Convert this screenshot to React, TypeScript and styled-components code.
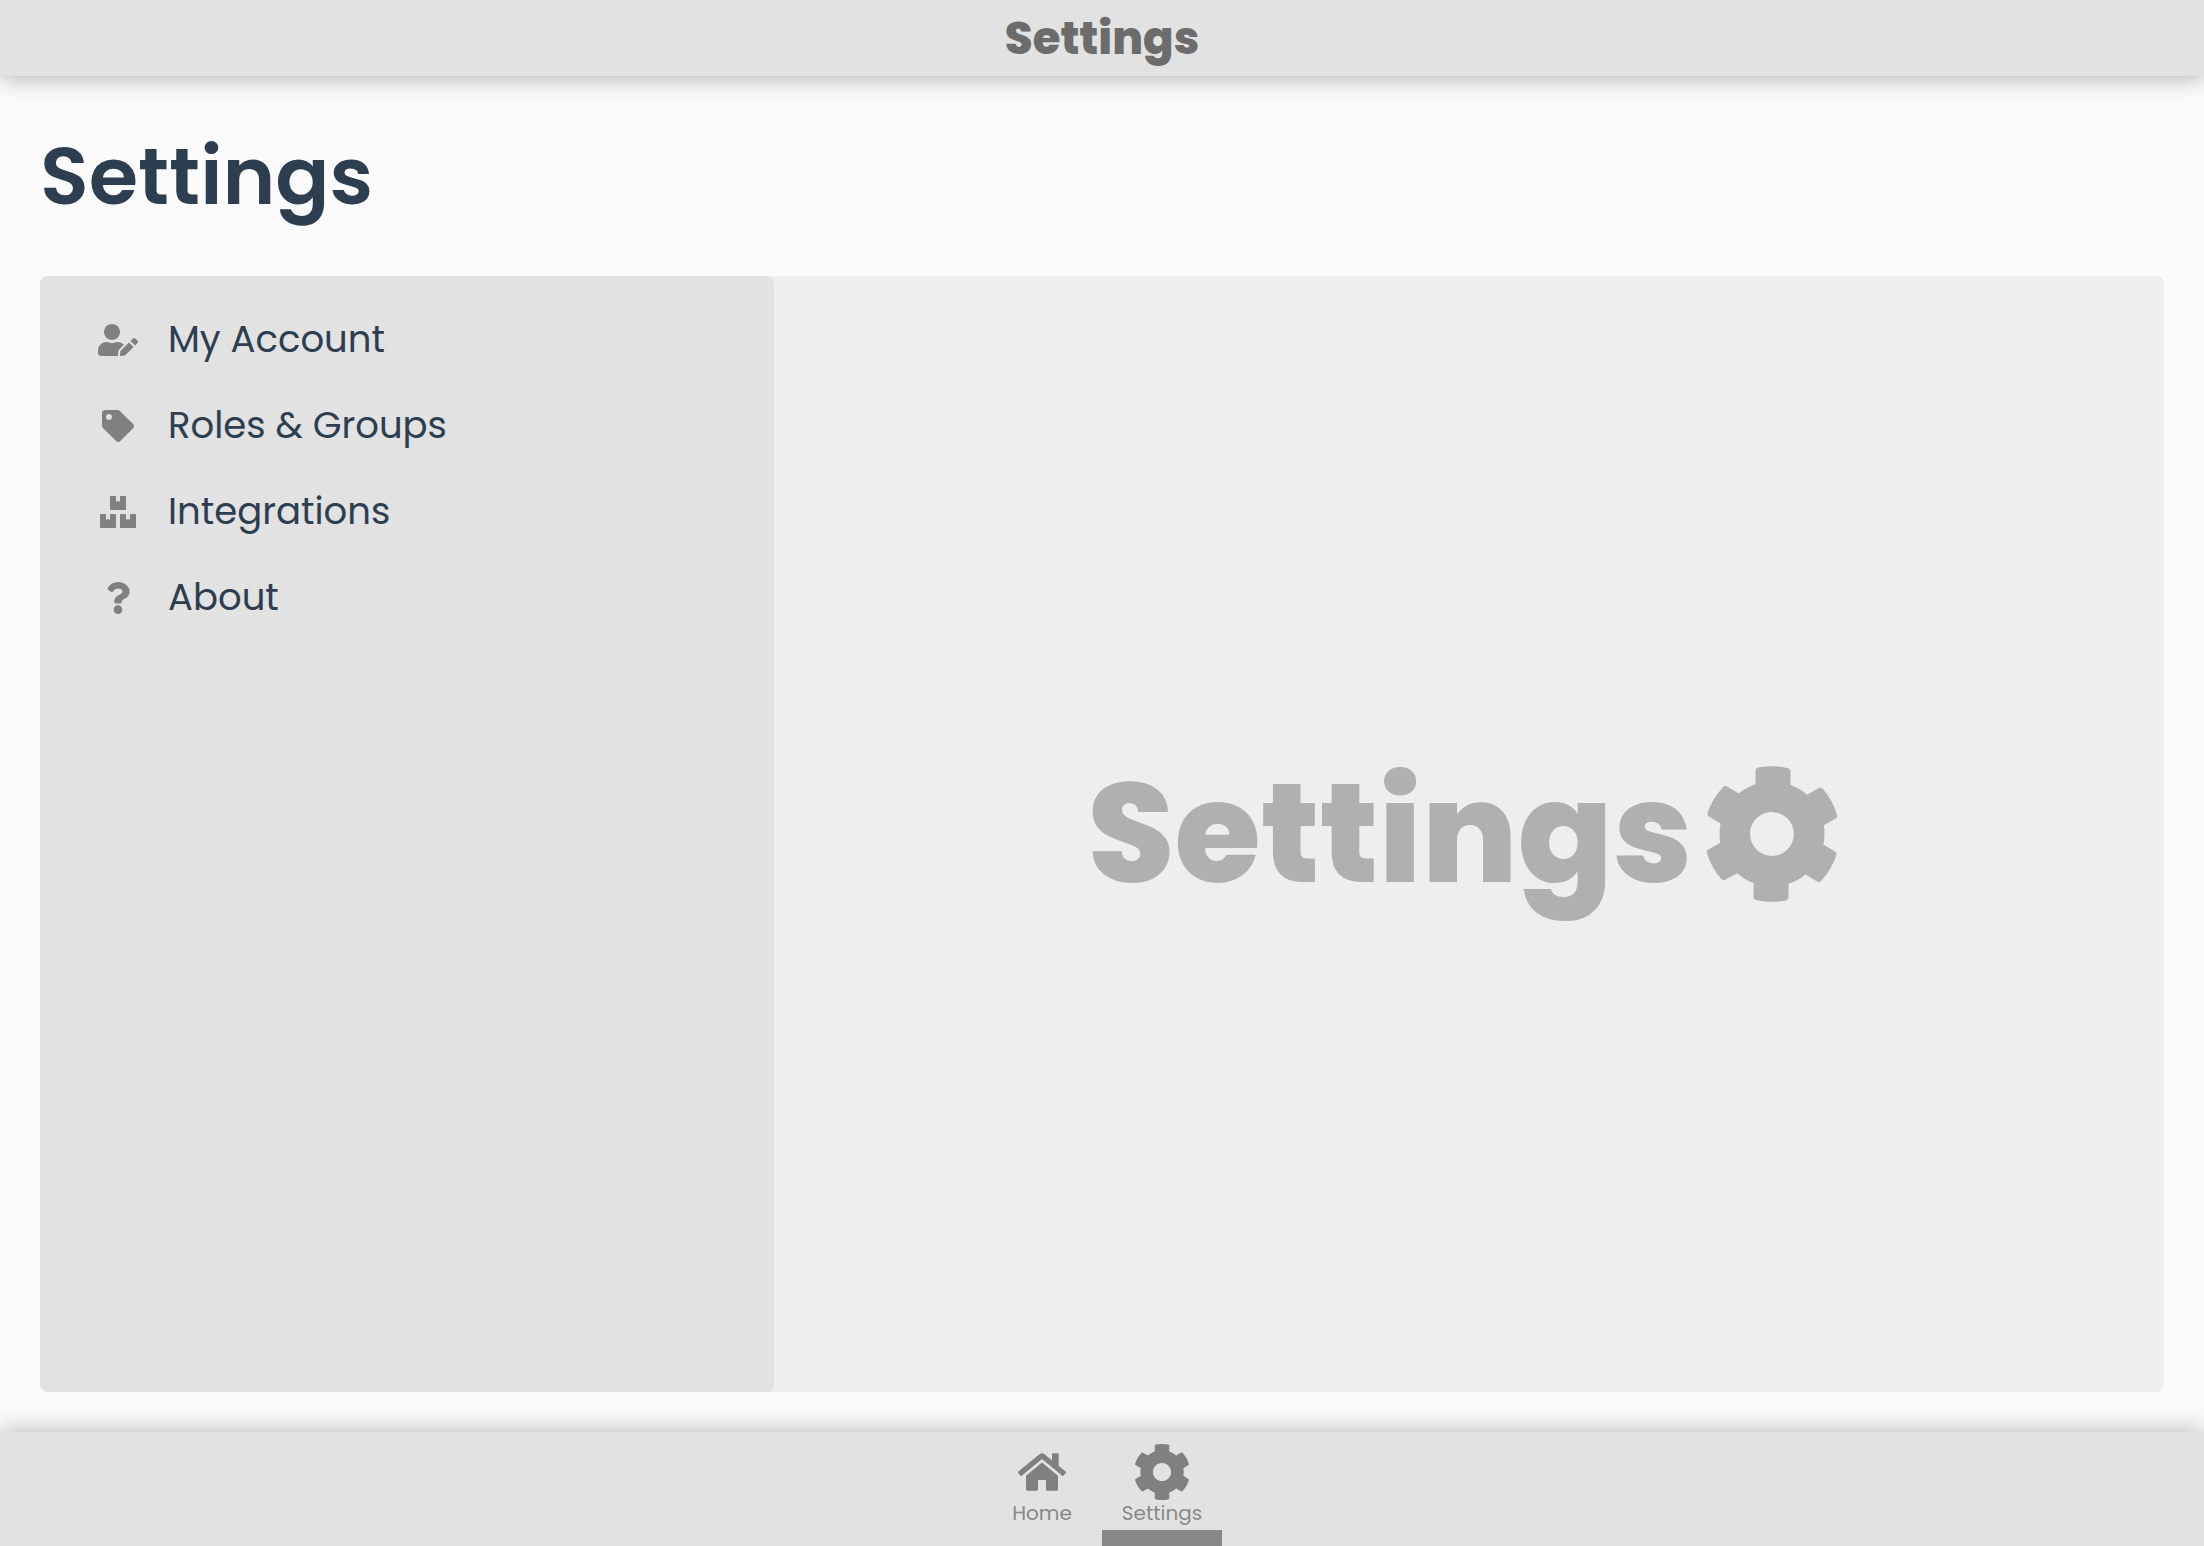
import React from "react";
import styled, { createGlobalStyle } from "styled-components";
import { FaBoxes, FaCog, FaHome, FaQuestion, FaTag, FaUserEdit } from "react-icons/fa";

const GlobalStyle = createGlobalStyle`
  *, *::before, *::after { box-sizing: border-box; }
  body {
    margin: 0;
    background: #fbfbfb;
    color: #2c3e50;
    font-family: Poppins, Inter, "Open Sans", sans-serif;
  }
`;

const Page = styled.div`
  display: flex;
  flex-direction: column;
  min-height: 100vh;
`;

const TopBar = styled.header`
  display: flex;
  align-items: center;
  justify-content: center;
  height: 76px;
  padding-top: 2px;
  background: #e2e2e2;
  box-shadow: 0 0 24px rgba(0, 0, 0, 0.35);
  color: #6c6c6c;
  font-size: 45px;
  font-weight: 800;
`;

const Main = styled.main`
  display: flex;
  flex: 1;
  flex-direction: column;
  padding: 0 40px 40px;
`;

const Title = styled.h1`
  margin: 0;
  font-size: 80px;
  font-weight: 600;
  line-height: 200px;
`;

const Panel = styled.div`
  display: flex;
  flex: 1;
  border-radius: 8px;
  background: #eeeeee;
`;

const Menu = styled.nav`
  flex: none;
  width: 734px;
  padding: 21px 48px;
  border-radius: 8px;
  background: #e2e2e2;
`;

const MenuItem = styled.button`
  display: flex;
  align-items: center;
  gap: 20px;
  width: 100%;
  height: 86px;
  padding: 0;
  border: 0;
  background: none;
  color: inherit;
  font: inherit;
  font-size: 37px;
  text-align: left;
  cursor: pointer;
`;

const MenuIcon = styled.span<{ $size: number }>`
  display: flex;
  justify-content: center;
  width: 60px;
  color: #808080;
  font-size: ${(p) => p.$size}px;
`;

const MenuLabel = styled.span`
  padding-bottom: 3px;
`;

const Placeholder = styled.section`
  display: flex;
  flex: 1;
  align-items: center;
  justify-content: center;
  gap: 10px;
  padding-right: 8px;
  color: #b0b0b0;
`;

const PlaceholderText = styled.h2`
  margin: 0;
  padding-bottom: 2px;
  font-size: 140px;
  font-weight: 800;
  line-height: 1;
`;

const PlaceholderIcon = styled(FaCog)`
  font-size: 140px;
  transform: rotate(1deg);
`;

const BottomBar = styled.nav`
  display: flex;
  justify-content: center;
  height: 114px;
  background: #e2e2e2;
  box-shadow: 0 0 24px rgba(0, 0, 0, 0.3);
`;

const Tab = styled.a<{ $active?: boolean }>`
  display: flex;
  flex-direction: column;
  align-items: center;
  width: 120px;
  padding-top: 10px;
  border-bottom: 16px solid ${(p) => (p.$active ? "#888888" : "transparent")};
  color: #888888;
  font-size: 20px;
  line-height: 22px;
  text-decoration: none;
`;

const TabIcon = styled.span<{ $size: number }>`
  display: flex;
  align-items: center;
  justify-content: center;
  height: 60px;
  color: #808080;
  font-size: ${(p) => p.$size}px;
`;

const menu = [
  { label: "My Account", Icon: FaUserEdit, size: 40 },
  { label: "Roles & Groups", Icon: FaTag, size: 32 },
  { label: "Integrations", Icon: FaBoxes, size: 36 },
  { label: "About", Icon: FaQuestion, size: 32 },
];

export default function App() {
  return (
    <Page>
      <GlobalStyle />
      <TopBar>Settings</TopBar>
      <Main>
        <Title>Settings</Title>
        <Panel>
          <Menu aria-label="Settings sections">
            {menu.map(({ label, Icon, size }) => (
              <MenuItem key={label} type="button">
                <MenuIcon $size={size}><Icon /></MenuIcon>
                <MenuLabel>{label}</MenuLabel>
              </MenuItem>
            ))}
          </Menu>
          <Placeholder>
            <PlaceholderText>Settings</PlaceholderText>
            <PlaceholderIcon />
          </Placeholder>
        </Panel>
      </Main>
      <BottomBar aria-label="Main">
        <Tab href="#home">
          <TabIcon $size={48}><FaHome /></TabIcon>
          Home
        </Tab>
        <Tab href="#settings" $active aria-current="page">
          <TabIcon $size={58}><FaCog /></TabIcon>
          Settings
        </Tab>
      </BottomBar>
    </Page>
  );
}
